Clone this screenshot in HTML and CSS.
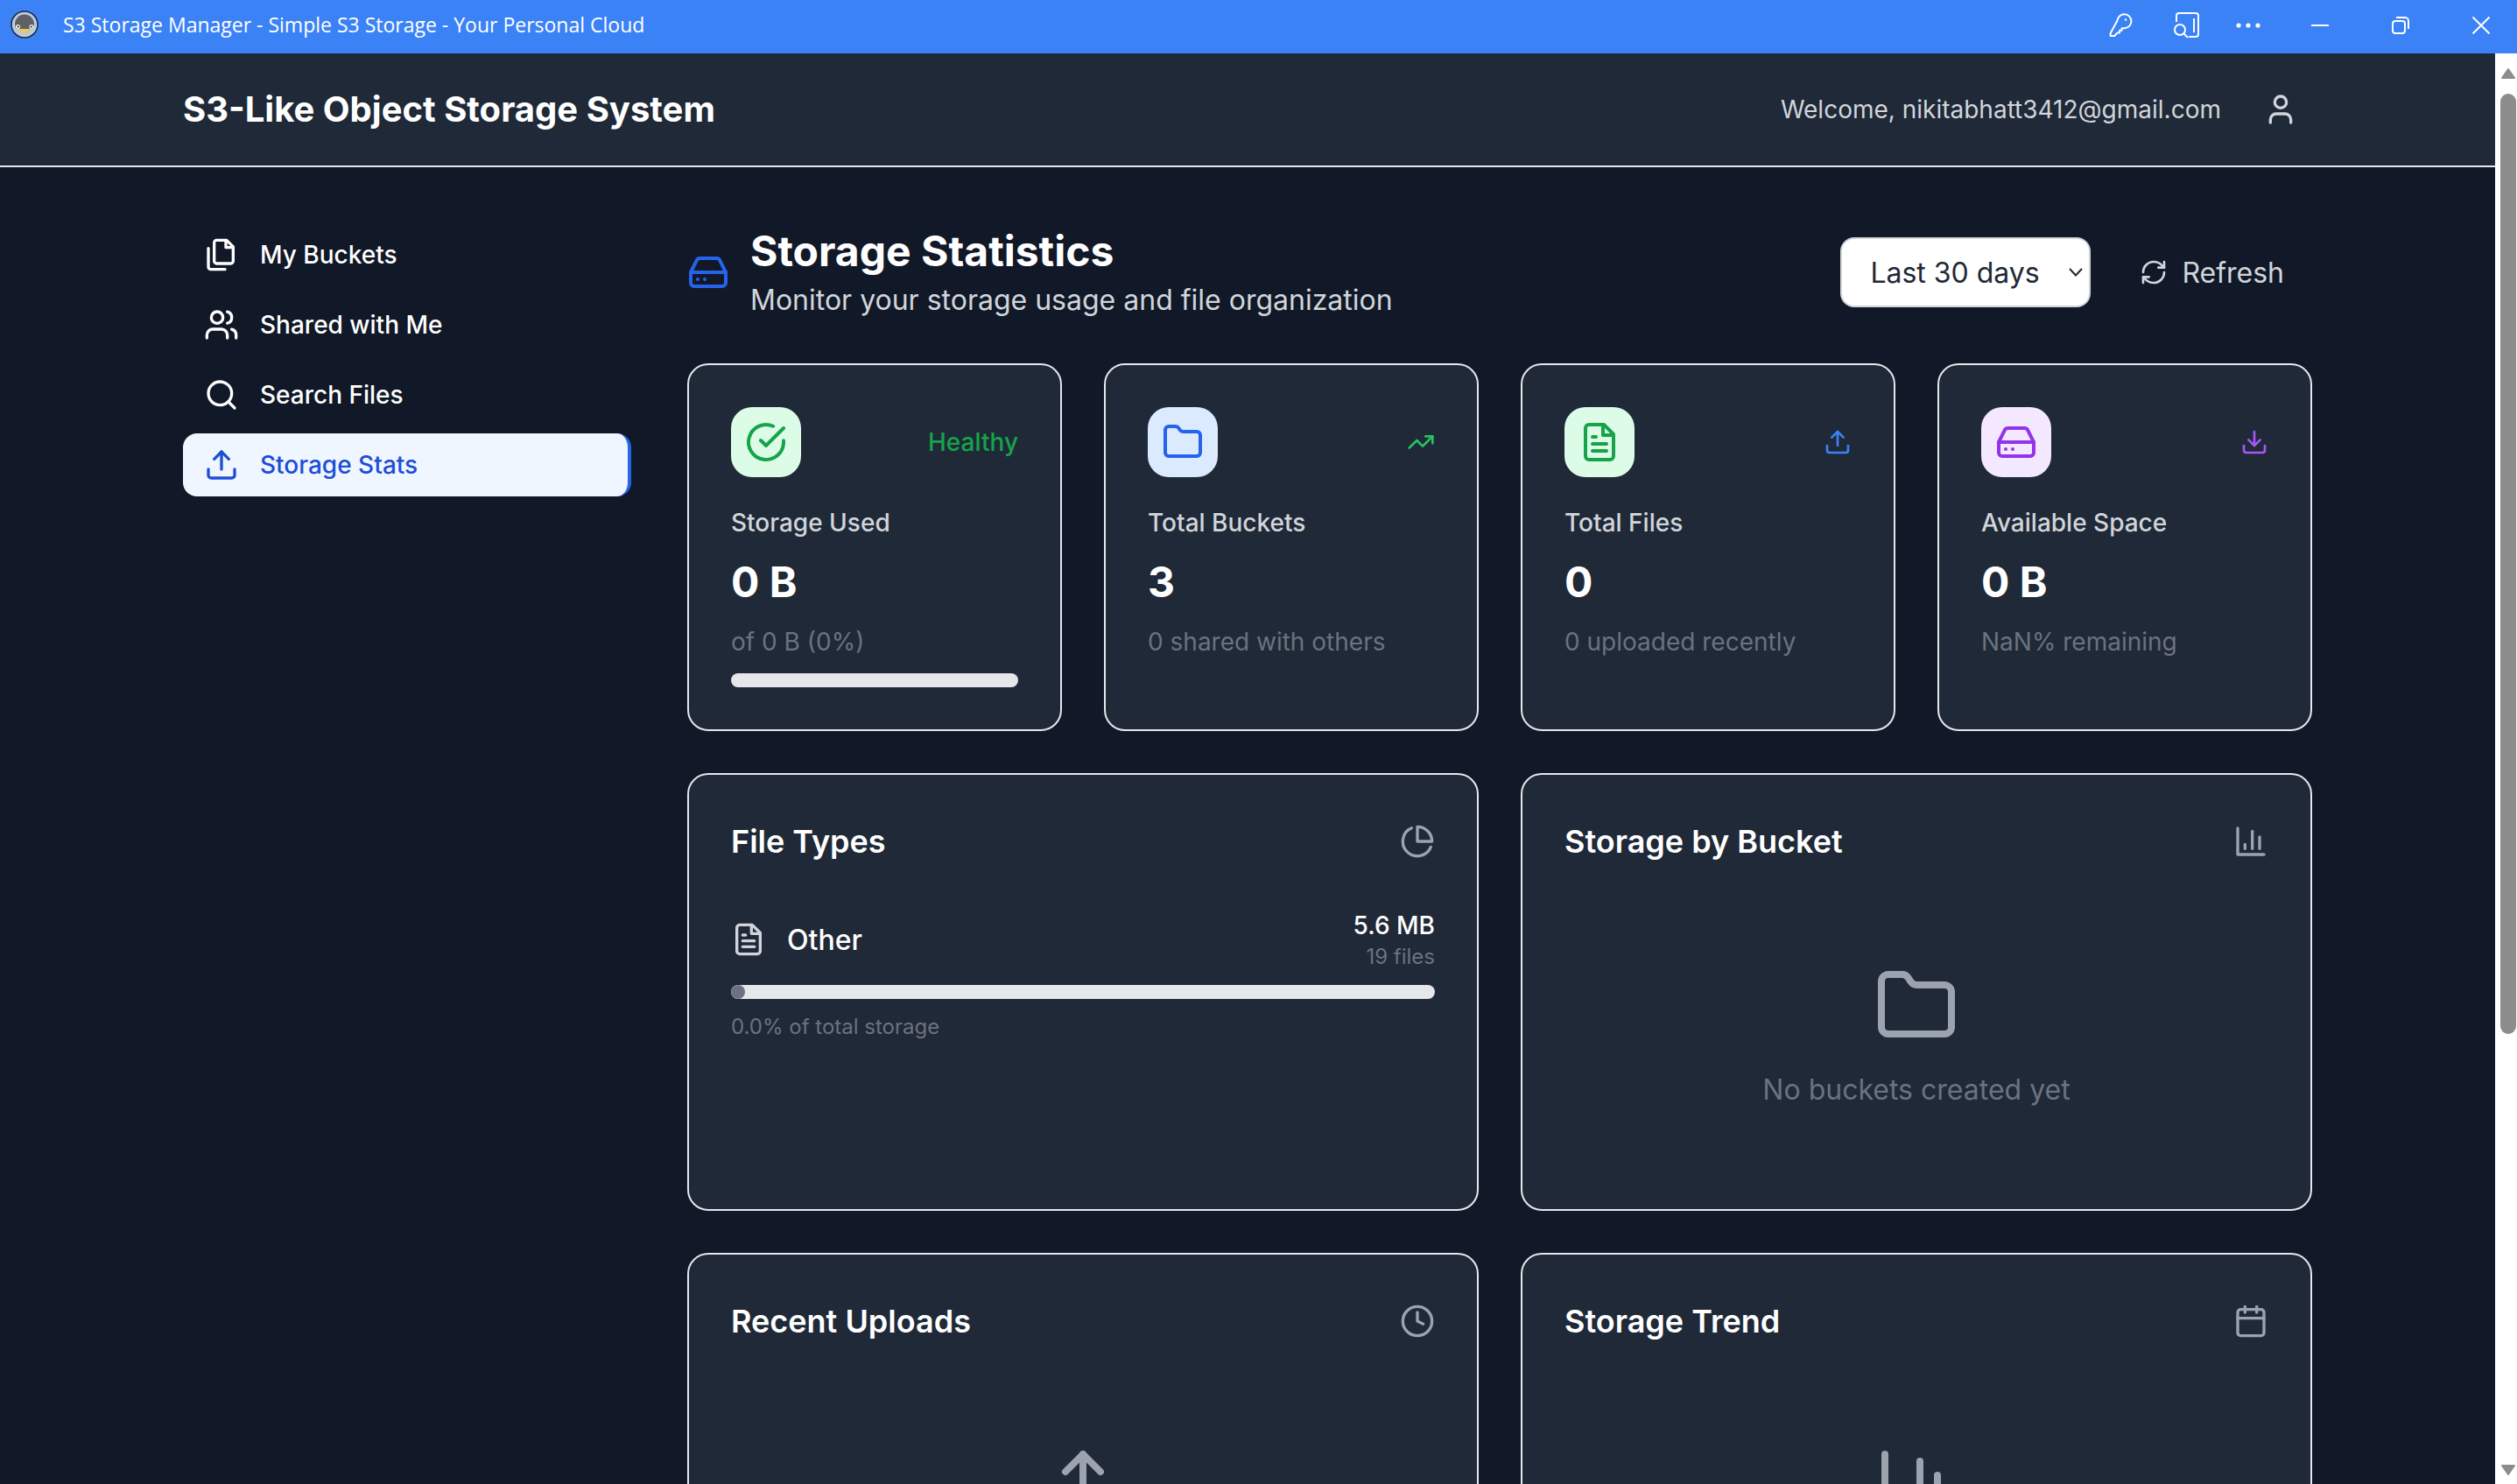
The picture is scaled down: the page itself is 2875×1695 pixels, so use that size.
FILE: index.html
```html
<!DOCTYPE html>
<html lang="en">
<head>
    <meta charset="UTF-8">
    <meta name="viewport" content="width=device-width, initial-scale=1.0">
    <title>S3 Storage Manager - Simple S3 Storage - Your Personal Cloud</title>
    <link rel="stylesheet" href="styles.css">
</head>
<body>
    <!-- Window title bar -->
    <div class="titlebar">
        <svg class="app-logo" viewBox="0 0 32 32">
            <circle cx="16" cy="16" r="15" fill="#b9cde6" stroke="#1f2937" stroke-width="1.5"/>
            <circle cx="16" cy="15.5" r="11" fill="#5f6265"/>
            <path d="M6 21 A11 11 0 0 0 26 21 Z" fill="#c9c5b4"/>
            <circle cx="8.5" cy="18.5" r="2.6" fill="#efe9d2"/>
            <circle cx="24" cy="18.5" r="2.6" fill="#efe9d2"/>
            <circle cx="8.8" cy="18.5" r="1" fill="#222"/>
            <circle cx="23.7" cy="18.5" r="1" fill="#222"/>
            <path d="M11 21.5 L21 21.5 L16 26 Z" fill="#f2cf3c"/>
        </svg>
        <span class="window-title">S3 Storage Manager - Simple S3 Storage - Your Personal Cloud</span>
        <div class="window-controls">
            <span class="tb-btn tb-key">
                <svg width="28" height="28" viewBox="0 0 28 28" fill="none" stroke="#fff" stroke-width="2">
                    <path d="M10.5 8.5 A8 8 0 1 1 19 17.2 L15.6 17.2 L15.6 19.8 L13 19.8 L13 22.4 L10.4 22.4 L7.4 26 L2.6 26 L2.6 23 Z" stroke-linejoin="round"/>
                    <circle cx="20" cy="7.5" r="1.2" fill="#fff" stroke="none"/>
                </svg>
            </span>
            <span class="tb-btn tb-app">
                <svg width="32" height="32" viewBox="0 0 32 32" fill="none" stroke="#fff" stroke-width="2">
                    <path d="M4 12 V5 A3 3 0 0 1 7 2 H26 A3 3 0 0 1 29 5 V26 A3 3 0 0 1 26 29 H18"/>
                    <path d="M24 8 V24"/>
                    <circle cx="8" cy="21" r="6"/>
                    <path d="M12.5 25.5 L17 30"/>
                </svg>
            </span>
            <span class="tb-btn tb-more">
                <svg width="28" height="6" viewBox="0 0 28 6" fill="#fff">
                    <circle cx="3" cy="3" r="2.6"/>
                    <circle cx="14" cy="3" r="2.6"/>
                    <circle cx="25" cy="3" r="2.6"/>
                </svg>
            </span>
            <span class="tb-btn">
                <svg width="20" height="2" viewBox="0 0 20 2"><rect width="20" height="2" fill="#fff"/></svg>
            </span>
            <span class="tb-btn">
                <svg width="20" height="20" viewBox="0 0 20 20" fill="none" stroke="#fff" stroke-width="2">
                    <rect x="1" y="5" width="14" height="14" rx="3"/>
                    <path d="M5 1 H15 A4 4 0 0 1 19 5 V14"/>
                </svg>
            </span>
            <span class="tb-btn tb-close">
                <svg width="20" height="20" viewBox="0 0 20 20" stroke="#fff" stroke-width="2"><path d="M0.5 0.5 L19.5 19.5 M19.5 0.5 L0.5 19.5"/></svg>
            </span>
        </div>
    </div>

    <div class="window-body">
        <div class="page">
            <!-- Top navigation -->
            <header class="topbar">
                <div class="container topbar-inner">
                    <h1 class="brand">S3-Like Object Storage System</h1>
                    <div class="user-area">
                        <span class="welcome">Welcome, nikitabhatt3412@gmail.com</span>
                        <span class="user-btn">
                            <svg class="icon icon-20" viewBox="0 0 24 24"><path d="M19 21v-2a4 4 0 0 0-4-4H9a4 4 0 0 0-4 4v2"/><circle cx="12" cy="7" r="4"/></svg>
                        </span>
                    </div>
                </div>
            </header>

            <div class="container layout">
                <!-- Sidebar -->
                <nav class="sidebar">
                    <a class="nav-item">
                        <svg class="icon icon-20" viewBox="0 0 24 24"><path d="M15.5 2H8.6c-.4 0-.8.2-1.1.5-.3.3-.5.7-.5 1.1v12.8c0 .4.2.8.5 1.1.3.3.7.5 1.1.5h9.8c.4 0 .8-.2 1.1-.5.3-.3.5-.7.5-1.1V6.5L15.5 2z"/><path d="M3 7.6v12.8c0 .4.2.8.5 1.1.3.3.7.5 1.1.5h9.8"/><path d="M15 2v5h5"/></svg>
                        My Buckets
                    </a>
                    <a class="nav-item">
                        <svg class="icon icon-20" viewBox="0 0 24 24"><path d="M16 21v-2a4 4 0 0 0-4-4H6a4 4 0 0 0-4 4v2"/><circle cx="9" cy="7" r="4"/><path d="M22 21v-2a4 4 0 0 0-3-3.87"/><path d="M16 3.13a4 4 0 0 1 0 7.75"/></svg>
                        Shared with Me
                    </a>
                    <a class="nav-item">
                        <svg class="icon icon-20" viewBox="0 0 24 24"><circle cx="11" cy="11" r="8"/><path d="m21 21-4.3-4.3"/></svg>
                        Search Files
                    </a>
                    <a class="nav-item active">
                        <svg class="icon icon-20" viewBox="0 0 24 24"><path d="M21 15v4a2 2 0 0 1-2 2H5a2 2 0 0 1-2-2v-4"/><path d="M17 8l-5-5-5 5"/><path d="M12 3v12"/></svg>
                        Storage Stats
                    </a>
                </nav>

                <main class="main">
                    <div class="page-head">
                        <div class="page-title">
                            <svg class="icon icon-24 blue" viewBox="0 0 24 24"><path d="M22 12H2"/><path d="M5.45 5.11 2 12v6a2 2 0 0 0 2 2h16a2 2 0 0 0 2-2v-6l-3.45-6.89A2 2 0 0 0 16.76 4H7.24a2 2 0 0 0-1.79 1.11z"/><path d="M6 16h.01"/><path d="M10 16h.01"/></svg>
                            <div>
                                <h2>Storage Statistics</h2>
                                <p>Monitor your storage usage and file organization</p>
                            </div>
                        </div>
                        <div class="page-actions">
                            <div class="range-select">
                                <span>Last 30 days</span>
                                <svg class="select-arrow" viewBox="0 0 16 10"><path d="M1 1 L8 8.5 L15 1"/></svg>
                            </div>
                            <button class="refresh-btn" type="button">
                                <svg class="icon icon-16" viewBox="0 0 24 24"><path d="M3 12a9 9 0 0 1 9-9 9.75 9.75 0 0 1 6.74 2.74L21 8"/><path d="M21 3v5h-5"/><path d="M21 12a9 9 0 0 1-9 9 9.75 9.75 0 0 1-6.74-2.74L3 16"/><path d="M8 16H3v5"/></svg>
                                Refresh
                            </button>
                        </div>
                    </div>

                    <!-- Stat cards -->
                    <section class="stats-grid">
                        <div class="card stat-card">
                            <div class="stat-top">
                                <span class="stat-icon bg-green">
                                    <svg class="icon icon-24" viewBox="0 0 24 24"><path d="M22 11.08V12a10 10 0 1 1-5.93-9.14"/><path d="m9 11 3 3L22 4"/></svg>
                                </span>
                                <span class="health">Healthy</span>
                            </div>
                            <div class="stat-label">Storage Used</div>
                            <div class="stat-value">0 B</div>
                            <div class="stat-sub">of 0 B (0%)</div>
                            <div class="bar stat-bar"></div>
                        </div>
                        <div class="card stat-card">
                            <div class="stat-top">
                                <span class="stat-icon bg-blue">
                                    <svg class="icon icon-24" viewBox="0 0 24 24"><path d="M20 20a2 2 0 0 0 2-2V8a2 2 0 0 0-2-2h-7.9a2 2 0 0 1-1.69-.9L9.6 3.9A2 2 0 0 0 7.93 3H4a2 2 0 0 0-2 2v13a2 2 0 0 0 2 2Z"/></svg>
                                </span>
                                <svg class="icon icon-16 c-trend" viewBox="0 0 24 24"><path d="m22 7-8.5 8.5-5-5L2 17"/><path d="M16 7h6v6"/></svg>
                            </div>
                            <div class="stat-label">Total Buckets</div>
                            <div class="stat-value">3</div>
                            <div class="stat-sub">0 shared with others</div>
                        </div>
                        <div class="card stat-card">
                            <div class="stat-top">
                                <span class="stat-icon bg-green">
                                    <svg class="icon icon-24" viewBox="0 0 24 24"><path d="M14.5 2H6a2 2 0 0 0-2 2v16a2 2 0 0 0 2 2h12a2 2 0 0 0 2-2V7.5L14.5 2z"/><path d="M14 2v6h6"/><path d="M16 13H8"/><path d="M16 17H8"/><path d="M10 9H8"/></svg>
                                </span>
                                <svg class="icon icon-16 c-blue" viewBox="0 0 24 24"><path d="M21 15v4a2 2 0 0 1-2 2H5a2 2 0 0 1-2-2v-4"/><path d="M17 8l-5-5-5 5"/><path d="M12 3v12"/></svg>
                            </div>
                            <div class="stat-label">Total Files</div>
                            <div class="stat-value">0</div>
                            <div class="stat-sub">0 uploaded recently</div>
                        </div>
                        <div class="card stat-card">
                            <div class="stat-top">
                                <span class="stat-icon bg-purple">
                                    <svg class="icon icon-24" viewBox="0 0 24 24"><path d="M22 12H2"/><path d="M5.45 5.11 2 12v6a2 2 0 0 0 2 2h16a2 2 0 0 0 2-2v-6l-3.45-6.89A2 2 0 0 0 16.76 4H7.24a2 2 0 0 0-1.79 1.11z"/><path d="M6 16h.01"/><path d="M10 16h.01"/></svg>
                                </span>
                                <svg class="icon icon-16 c-purple" viewBox="0 0 24 24"><path d="M21 15v4a2 2 0 0 1-2 2H5a2 2 0 0 1-2-2v-4"/><path d="m7 10 5 5 5-5"/><path d="M12 15V3"/></svg>
                            </div>
                            <div class="stat-label">Available Space</div>
                            <div class="stat-value">0 B</div>
                            <div class="stat-sub">NaN% remaining</div>
                        </div>
                    </section>

                    <!-- Chart cards -->
                    <section class="charts-grid">
                        <div class="card chart-card">
                            <div class="chart-head">
                                <h3>File Types</h3>
                                <svg class="icon icon-20 c-muted" viewBox="0 0 24 24"><path d="M21.21 15.89A10 10 0 1 1 8 2.83"/><path d="M22 12A10 10 0 0 0 12 2v10z"/></svg>
                            </div>
                            <div class="type-row">
                                <div class="type-name">
                                    <svg class="icon icon-20 c-light" viewBox="0 0 24 24"><path d="M14.5 2H6a2 2 0 0 0-2 2v16a2 2 0 0 0 2 2h12a2 2 0 0 0 2-2V7.5L14.5 2z"/><path d="M14 2v6h6"/><path d="M16 13H8"/><path d="M16 17H8"/><path d="M10 9H8"/></svg>
                                    Other
                                </div>
                                <div class="type-size">
                                    <div class="size-main">5.6 MB</div>
                                    <div class="size-sub">19 files</div>
                                </div>
                            </div>
                            <div class="bar"><div class="bar-fill"></div></div>
                            <div class="type-share">0.0% of total storage</div>
                        </div>
                        <div class="card chart-card">
                            <div class="chart-head">
                                <h3>Storage by Bucket</h3>
                                <svg class="icon icon-20 c-muted" viewBox="0 0 24 24"><path d="M3 3v18h18"/><path d="M18 17V9"/><path d="M13 17V5"/><path d="M8 17v-3"/></svg>
                            </div>
                            <div class="empty">
                                <svg class="icon icon-48 c-muted" viewBox="0 0 24 24"><path d="M20 20a2 2 0 0 0 2-2V8a2 2 0 0 0-2-2h-7.9a2 2 0 0 1-1.69-.9L9.6 3.9A2 2 0 0 0 7.93 3H4a2 2 0 0 0-2 2v13a2 2 0 0 0 2 2Z"/></svg>
                                <p>No buckets created yet</p>
                            </div>
                        </div>
                        <div class="card chart-card">
                            <div class="chart-head">
                                <h3>Recent Uploads</h3>
                                <svg class="icon icon-20 c-muted" viewBox="0 0 24 24"><circle cx="12" cy="12" r="10"/><path d="M12 6v6l4 2"/></svg>
                            </div>
                            <div class="empty">
                                <svg class="icon icon-48 c-muted" viewBox="0 0 24 24"><path d="M21 15v4a2 2 0 0 1-2 2H5a2 2 0 0 1-2-2v-4"/><path d="M17 8l-5-5-5 5"/><path d="M12 3v12"/></svg>
                            </div>
                        </div>
                        <div class="card chart-card">
                            <div class="chart-head">
                                <h3>Storage Trend</h3>
                                <svg class="icon icon-20 c-muted" viewBox="0 0 24 24"><path d="M8 2v4"/><path d="M16 2v4"/><rect x="3" y="4" width="18" height="18" rx="2"/><path d="M3 10h18"/></svg>
                            </div>
                            <div class="empty">
                                <svg class="icon icon-48 c-muted" viewBox="0 0 24 24"><path d="M3 3v18h18"/><path d="M18 17V9"/><path d="M13 17V5"/><path d="M8 17v-3"/></svg>
                            </div>
                        </div>
                    </section>
                </main>
            </div>
        </div>

        <!-- Window scrollbar -->
        <div class="scrollbar">
            <svg class="scroll-arrow" viewBox="0 0 18 14"><path d="M9 2 L16 12 H2 Z"/></svg>
            <div class="scroll-thumb"></div>
            <svg class="scroll-arrow scroll-down" viewBox="0 0 18 14"><path d="M9 12 L16 2 H2 Z"/></svg>
        </div>
    </div>
</body>
</html>
```

FILE: styles.css
```css
* {
    box-sizing: border-box;
}

html,
body {
    height: 100%;
    margin: 0;
}

body {
    font-family: Inter, "Liberation Sans", sans-serif;
    background-color: #111827;
    color: #fff;
    overflow: hidden;
    display: flex;
    flex-direction: column;
}

h1, h2, h3, p {
    margin: 0;
}

/* title bar */
.titlebar {
    height: 61px;
    flex-shrink: 0;
    background-color: #3b82f6;
    display: flex;
    align-items: center;
    padding-left: 12px;
}

.app-logo {
    width: 32px;
    height: 32px;
    margin-bottom: 5px;
}

.window-title {
    font-family: "Open Sans", sans-serif;
    font-size: 23px;
    margin-left: 28px;
    margin-bottom: 5px;
    color: #fff;
}

.window-controls {
    margin-left: auto;
    display: flex;
    align-items: center;
    height: 100%;
}

.tb-btn {
    width: 92px;
    height: 100%;
    display: flex;
    align-items: center;
    justify-content: center;
    padding-bottom: 3px;
}

.tb-key {
    width: 84px;
}

.tb-app {
    width: 68px;
}

.tb-more {
    width: 72px;
}

.tb-close {
    width: 87px;
    padding-left: 5px;
}

/* page */
.window-body {
    flex: 1;
    display: flex;
    min-height: 0;
}

.page {
    flex: 1;
    min-width: 0;
    overflow: hidden;
}

.container {
    width: 2432px;
    margin: 0 auto;
}

.topbar {
    height: 130px;
    background-color: #1f2937;
    border-bottom: 2px solid #e5e7eb;
}

.topbar-inner {
    height: 128px;
    display: flex;
    align-items: center;
    justify-content: space-between;
}

.brand {
    font-size: 40px;
    line-height: 56px;
    font-weight: 700;
}

.user-area {
    display: flex;
    align-items: center;
    gap: 32px;
}

.welcome {
    font-size: 28px;
    line-height: 40px;
    color: #d1d5db;
}

.user-btn {
    display: flex;
    padding: 16px;
    color: #d1d5db;
}

.icon {
    fill: none;
    stroke: currentColor;
    stroke-width: 2;
    stroke-linecap: round;
    stroke-linejoin: round;
    flex-shrink: 0;
    display: block;
}

.icon-16 {
    width: 32px;
    height: 32px;
}

.icon-20 {
    width: 40px;
    height: 40px;
}

.icon-24 {
    width: 48px;
    height: 48px;
}

.icon-48 {
    width: 96px;
    height: 96px;
}

.layout {
    display: flex;
    gap: 64px;
    padding-top: 64px;
}

/* sidebar */
.sidebar {
    width: 512px;
    flex-shrink: 0;
    display: flex;
    flex-direction: column;
    gap: 8px;
}

.nav-item {
    height: 72px;
    display: flex;
    align-items: center;
    gap: 24px;
    padding: 0 24px;
    font-size: 28px;
    font-weight: 500;
    color: #fff;
    border-radius: 16px;
}

.nav-item.active {
    background-color: #eff6ff;
    color: #1d4ed8;
    border-right: 4px solid #2563eb;
}

.nav-item.active .icon {
    color: #1d4ed8;
}

/* main */
.main {
    flex: 1;
    min-width: 0;
}

.page-head {
    display: flex;
    align-items: center;
    justify-content: space-between;
    margin-bottom: 48px;
}

.page-title {
    display: flex;
    align-items: center;
    gap: 24px;
}

.blue {
    color: #2563eb;
}

.page-title h2 {
    font-size: 48px;
    line-height: 64px;
    font-weight: 700;
}

.page-title p {
    font-size: 32px;
    line-height: 48px;
    color: #d1d5db;
}

.page-actions {
    display: flex;
    align-items: center;
    gap: 24px;
}

.range-select {
    width: 286px;
    height: 80px;
    background-color: #fff;
    border: 2px solid #d1d5db;
    border-radius: 16px;
    display: flex;
    align-items: center;
    justify-content: space-between;
    padding: 0 7px 0 32px;
    font-size: 32px;
    color: #1f2937;
}

.select-arrow {
    width: 16px;
    height: 10px;
    fill: none;
    stroke: #1f2937;
    stroke-width: 2;
}

.refresh-btn {
    display: flex;
    align-items: center;
    gap: 16px;
    height: 80px;
    padding: 0 32px;
    background: none;
    border: none;
    font-family: inherit;
    font-size: 32px;
    color: #d1d5db;
}

.card {
    background-color: #1f2937;
    border: 2px solid #e5e7eb;
    border-radius: 24px;
    padding: 48px;
}

.stats-grid {
    display: grid;
    grid-template-columns: repeat(4, 1fr);
    gap: 48px;
    margin-bottom: 48px;
}

.stat-card {
    height: 420px;
}

.stat-top {
    display: flex;
    align-items: center;
    justify-content: space-between;
    margin-bottom: 32px;
}

.stat-icon {
    width: 80px;
    height: 80px;
    border-radius: 24px;
    display: flex;
    align-items: center;
    justify-content: center;
}

.bg-green {
    background-color: #dcfce7;
    color: #16a34a;
}

.bg-blue {
    background-color: #dbeafe;
    color: #2563eb;
}

.bg-purple {
    background-color: #f3e8ff;
    color: #9333ea;
}

.c-trend {
    color: #22c55e;
}

.c-blue {
    color: #3b82f6;
}

.c-purple {
    color: #a855f7;
}

.c-muted {
    color: #9ca3af;
}

.c-light {
    color: #d1d5db;
}

.health {
    font-size: 28px;
    line-height: 40px;
    font-weight: 500;
    color: #16a34a;
}

.stat-label {
    font-size: 28px;
    line-height: 40px;
    font-weight: 500;
    color: #d1d5db;
    margin-bottom: 16px;
}

.stat-value {
    font-size: 48px;
    line-height: 64px;
    font-weight: 700;
    margin-bottom: 16px;
}

.stat-sub {
    font-size: 28px;
    line-height: 40px;
    color: #6b7280;
}

.bar {
    height: 16px;
    border-radius: 8px;
    background-color: #e5e7eb;
    overflow: hidden;
}

.stat-bar {
    margin-top: 16px;
}

.bar-fill {
    width: 16px;
    height: 100%;
    border-radius: 8px;
    background-color: #6b7280;
}

.charts-grid {
    display: grid;
    grid-template-columns: 1fr 1fr;
    gap: 48px;
    padding-bottom: 64px;
}

.chart-card {
    height: 500px;
}

.chart-head {
    display: flex;
    align-items: center;
    justify-content: space-between;
    margin-bottom: 48px;
}

.chart-head h3 {
    font-size: 36px;
    line-height: 56px;
    font-weight: 600;
}

.type-row {
    display: flex;
    align-items: center;
    justify-content: space-between;
    margin-bottom: 16px;
}

.type-name {
    display: flex;
    align-items: center;
    gap: 24px;
    font-size: 32px;
    font-weight: 500;
}

.type-size {
    text-align: right;
}

.size-main {
    font-size: 28px;
    line-height: 40px;
    font-weight: 500;
}

.size-sub {
    font-size: 24px;
    line-height: 32px;
    color: #6b7280;
}

.type-share {
    margin-top: 16px;
    font-size: 24px;
    line-height: 32px;
    color: #6b7280;
}

.empty {
    display: flex;
    flex-direction: column;
    align-items: center;
    gap: 24px;
    padding: 64px 0;
}

.empty p {
    font-size: 32px;
    line-height: 48px;
    color: #6b7280;
}

/* scrollbar */
.scrollbar {
    width: 25px;
    flex-shrink: 0;
    background-color: #fff;
    display: flex;
    flex-direction: column;
    align-items: center;
    padding: 16px 1px 9px 6px;
}

.scroll-arrow {
    width: 18px;
    height: 14px;
    fill: #8c8c8c;
    stroke: #8c8c8c;
    stroke-width: 2;
    stroke-linejoin: round;
}

.scroll-thumb {
    width: 18px;
    height: 1074px;
    margin-top: 16px;
    border-radius: 9px;
    background-color: #8c8c8c;
}

.scroll-down {
    margin-top: auto;
}
```
